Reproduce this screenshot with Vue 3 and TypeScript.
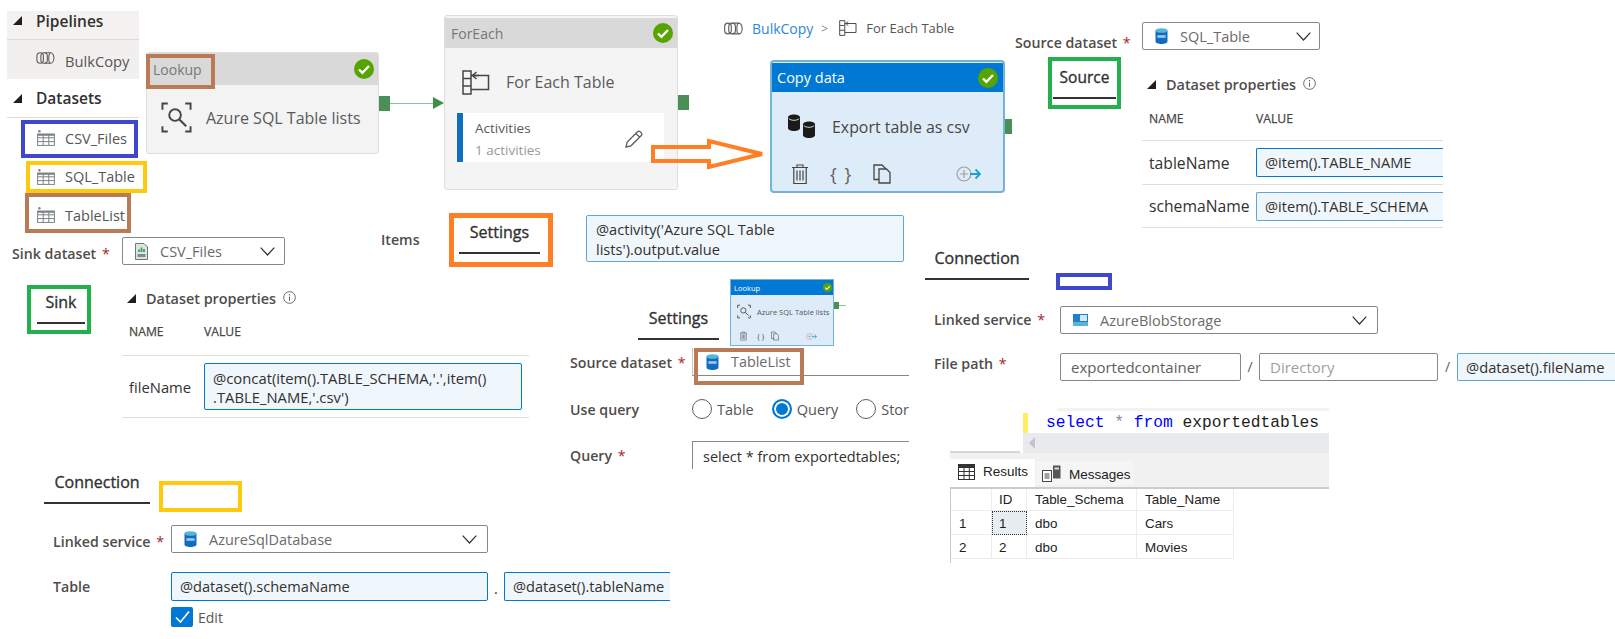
<script setup lang="ts">
interface DatasetRow { name: string }
const datasets: DatasetRow[] = [{ name: 'CSV_Files' }, { name: 'SQL_Table' }, { name: 'TableList' }]
const sqlRows = [
  { n: '1', id: '1', schema: 'dbo', table: 'Cars', active: true },
  { n: '2', id: '2', schema: 'dbo', table: 'Movies', active: false }
]
</script>

<template>
  <div class="canvas">
    <svg class="defs" width="0" height="0" aria-hidden="true">
      <defs>
        <symbol id="i-pipe" viewBox="0 0 20 13">
          <g fill="none" stroke="#605e5c" stroke-width="1.2">
            <rect x="0.7" y="0.8" width="7" height="11.4" rx="3.5" />
            <rect x="5" y="0.8" width="7" height="11.4" rx="3.5" />
            <path d="M9 .8h6.5a3.6 5.7 0 0 1 0 11.4H9" />
            <path d="M15.5 .8a2 5.7 0 0 0 0 11.4" />
          </g>
        </symbol>
        <symbol id="i-table" viewBox="0 0 18 16">
          <g fill="none" stroke="#7a8487" stroke-width="1">
            <rect x="0.6" y="4" width="16.8" height="11.4" />
            <path d="M0.6 7.8h16.800M0.6 11.600h16.800M6.200 4v11.400M11.800 4v11.400" />
          </g>
          <rect x="0.6" y="4" width="16.8" height="1.800" fill="#7a8487" />
          <circle cx="2.4" cy="1.3" r="1.2" fill="#7a8487" />
        </symbol>
        <symbol id="i-lookup" viewBox="0 0 32 32">
          <g fill="none" stroke="#484644" stroke-width="2">
            <path d="M7 1.5H1.5V8M25 1.5h5.5V8M7 30.5H1.5V25M25 30.5h5.5V25" />
            <circle cx="14.5" cy="13.5" r="6" />
            <path d="M19 18l7 7" stroke-width="2.2" />
          </g>
        </symbol>
        <symbol id="i-foreach" viewBox="0 0 28 25">
          <g fill="none" stroke="#484644" stroke-width="1.5">
            <path d="M1 1h8v23H1zM1 8.5h8M1 16h8" />
            <path d="M9 5.5h17.5v14H9" />
            <path d="M17 5.5h-6M14.5 2l-4 3.5 4 3.5" />
          </g>
        </symbol>
        <symbol id="i-check" viewBox="0 0 20 20">
          <circle cx="10" cy="10" r="10" fill="#57a300" />
          <path d="M5 10.5l3.4 3.4L15 7" fill="none" stroke="#fff" stroke-width="2.4" />
        </symbol>
        <symbol id="i-sql" viewBox="0 0 13 16">
          <path d="M0.5 2.5v11C0.5 15 3.2 16 6.5 16s6-1 6-2.5v-11z" fill="#0f6cc0" />
          <ellipse cx="6.5" cy="2.5" rx="6" ry="2.3" fill="#59b4d9" />
          <rect x="2.4" y="7.2" width="8.2" height="2.6" fill="#9ecbf0" />
        </symbol>
        <symbol id="i-csv" viewBox="0 0 13 17">
          <path d="M.5.5h8.5l3.5 3.5v12.5H.5z" fill="#dfe3e3" stroke="#69797e" />
          <path d="M4 9V6.5M6.5 9V4.5M9 9V6" stroke="#2e9f4a" stroke-width="1.7" />
          <rect x="2.5" y="11" width="8" height="3" fill="#7d8b8e" />
        </symbol>
        <symbol id="i-blob" viewBox="0 0 15 12">
          <rect width="15" height="12" fill="#1c7fd0" />
          <rect x="7" y="1" width="7" height="6" fill="#d5e7f5" />
          <rect y="8" width="15" height="4" fill="#59b4d9" />
        </symbol>
        <symbol id="i-trash" viewBox="0 0 16 20">
          <g fill="none" stroke="#484644" stroke-width="1.2">
            <path d="M0 3.5h16M5 3.5V1h6v2.5M1.8 3.5v16h12.4v-16" />
            <path d="M5 6.5v10M8 6.5v10M11 6.5v10" />
          </g>
        </symbol>
        <symbol id="i-copy" viewBox="0 0 18 20">
          <g fill="none" stroke="#484644" stroke-width="1.3">
            <path d="M6 15.5H1V1h8l4 4" />
            <path d="M6 5h7.5l3.5 3.5V19H6z" />
          </g>
        </symbol>
        <symbol id="i-addout" viewBox="0 0 25 16">
          <circle cx="8" cy="8" r="7" fill="none" stroke="#a19f9d" stroke-width="1.2" />
          <path d="M8 4v8M4 8h8" stroke="#a19f9d" stroke-width="1.2" />
          <path d="M14 8h9.5M19.5 3.5L24 8l-4.500 4.500" fill="none" stroke="#1fa0cc" stroke-width="1.800" />
        </symbol>
        <symbol id="i-pencil" viewBox="0 0 18 18">
          <path d="M1 17l1.200-5L12.500 1.700a1.800 1.800 0 0 1 2.600 0l1.200 1.200a1.800 1.800 0 0 1 0 2.600L6 15.800zM11 3.500l3.500 3.500" fill="none" stroke="#605e5c" stroke-width="1.300" />
        </symbol>
        <symbol id="i-chev" viewBox="0 0 15 9">
          <path d="M.7.7L7.500 8 14.300.7" fill="none" stroke="#323130" stroke-width="1.200" />
        </symbol>
        <symbol id="i-info" viewBox="0 0 14 14">
          <circle cx="7" cy="7" r="6.300" fill="none" stroke="#605e5c" />
          <path d="M7 6v4.500" stroke="#605e5c" stroke-width="1.100" />
          <circle cx="7" cy="4" r=".8" fill="#605e5c" />
        </symbol>
        <symbol id="i-grid" viewBox="0 0 17 16">
          <rect x=".5" y=".5" width="16" height="15" fill="#fff" stroke="#333" />
          <rect x=".5" y=".5" width="16" height="3.500" fill="#333" />
          <path d="M.5 7.500h16M.5 11.500h16M6 4v12M11.300 4v12" stroke="#333" />
        </symbol>
        <symbol id="i-msg" viewBox="0 0 19 17">
          <rect x=".5" y="5.500" width="9" height="11" fill="#fff" stroke="#444" />
          <path d="M2.500 9h5M2.500 11h5M2.500 13h5" stroke="#444" />
          <rect x="11" y=".5" width="7.500" height="13" fill="#555" />
          <rect x="12.500" y="2.500" width="4.500" height="2" fill="#ddd" />
        </symbol>
      </defs>
    </svg>

    <!-- Resource tree -->
    <aside class="tree">
      <div class="tree-head tree-head-pipe"><span class="tri"></span>Pipelines</div>
      <div class="tree-pipe"><svg class="ico-pipe"><use href="#i-pipe" /></svg>BulkCopy</div>
      <div class="tree-head tree-head-data"><span class="tri"></span>Datasets</div>
      <div v-for="d in datasets" :key="d.name" class="tree-item">
        <svg class="ico-table"><use href="#i-table" /></svg>{{ d.name }}
      </div>
    </aside>

    <!-- Lookup activity -->
    <div class="node node-lookup">
      <section class="card">
        <header class="card-head"><span>Lookup</span><svg class="ico-check"><use href="#i-check" /></svg></header>
        <div class="card-main main-lookup">
          <svg class="ico-lookup"><use href="#i-lookup" /></svg>
          <span>Azure SQL Table lists</span>
        </div>
      </section>
      <i class="handle"></i>
      <i class="link"></i>
      <i class="link-head"></i>
    </div>

    <!-- ForEach activity -->
    <div class="node node-foreach">
      <section class="card card-foreach">
        <header class="card-head head-foreach"><span>ForEach</span><svg class="ico-check"><use href="#i-check" /></svg></header>
        <div class="card-main main-foreach">
          <svg class="ico-foreach"><use href="#i-foreach" /></svg>
          <span>For Each Table</span>
        </div>
        <div class="activities">
          <div class="activities-text">
            <span>Activities</span>
            <small>1 activities</small>
          </div>
          <svg class="ico-pencil"><use href="#i-pencil" /></svg>
        </div>
      </section>
      <i class="handle"></i>
    </div>

    <!-- Breadcrumb -->
    <nav class="crumb">
      <svg class="ico-crumb-pipe"><use href="#i-pipe" /></svg>
      <a>BulkCopy</a>
      <span class="crumb-sep">&gt;</span>
      <svg class="ico-crumb-each"><use href="#i-foreach" /></svg>
      <span>For Each Table</span>
    </nav>

    <!-- Copy activity -->
    <div class="node node-copy">
      <section class="card card-active card-copy">
        <header class="card-head head-active"><span>Copy data</span><svg class="ico-check"><use href="#i-check" /></svg></header>
        <div class="card-main main-copy">
          <svg class="ico-cyl" viewBox="0 0 27 25">
            <g fill="#1b1a19">
              <path d="M0 3.500v10.500c0 1.800 2.700 3 6 3s6-1.200 6-3V3.500C12 1.700 9.300.5 6 .5S0 1.700 0 3.500z" />
              <path d="M15 10.500v10.500c0 1.800 2.700 3 6 3s6-1.200 6-3V10.500c0-1.800-2.700-3-6-3s-6 1.200-6 3z" />
            </g>
            <path d="M.8 4.500c1 1.200 3 1.800 5.200 1.800s4.200-.6 5.200-1.800M15.800 11.500c1 1.200 3 1.800 5.200 1.800s4.200-.6 5.200-1.800" fill="none" stroke="#deecf9" stroke-width=".9" />
          </svg>
          <span>Export table as csv</span>
        </div>
        <div class="card-tools">
          <svg class="ico-trash"><use href="#i-trash" /></svg>
          <span class="braces">{ }</span>
          <svg class="ico-copy"><use href="#i-copy" /></svg>
          <svg class="ico-addout"><use href="#i-addout" /></svg>
        </div>
      </section>
      <i class="handle handle-copy"></i>
    </div>

    <!-- Source -->
    <div class="field field-source">
      <label class="lbl">Source dataset <b>*</b></label>
      <div class="select select-source">
        <svg class="ico-sql"><use href="#i-sql" /></svg>
        <span>SQL_Table</span>
        <svg class="ico-chev"><use href="#i-chev" /></svg>
      </div>
    </div>
    <div class="tab tab-source">Source</div>
    <div class="props props-source">
      <div class="props-title"><span class="tri"></span>Dataset properties<svg class="ico-info"><use href="#i-info" /></svg></div>
      <div class="props-cols"><span>NAME</span><span>VALUE</span></div>
      <div class="props-row">
        <span>tableName</span>
        <div class="expr expr-clip">@item().TABLE_NAME</div>
      </div>
      <div class="props-row props-row-2">
        <span>schemaName</span>
        <div class="expr expr-clip expr-soft">@item().TABLE_SCHEMA</div>
      </div>
    </div>

    <!-- Items -->
    <div class="items-label">Items</div>
    <div class="tab tab-settings">Settings</div>
    <div class="expr expr-activity">@activity('Azure SQL Table<br />lists').output.value</div>

    <!-- Sink -->
    <div class="field field-sink">
      <label class="lbl">Sink dataset <b>*</b></label>
      <div class="select select-sink">
        <svg class="ico-csv"><use href="#i-csv" /></svg>
        <span>CSV_Files</span>
        <svg class="ico-chev"><use href="#i-chev" /></svg>
      </div>
    </div>
    <div class="tab tab-sink">Sink</div>
    <div class="props props-sink">
      <div class="props-title"><span class="tri"></span>Dataset properties<svg class="ico-info"><use href="#i-info" /></svg></div>
      <div class="props-cols"><span>NAME</span><span>VALUE</span></div>
      <div class="props-row props-row-sink">
        <span>fileName</span>
        <div class="expr expr-file">@concat(item().TABLE_SCHEMA,'.',item()<br />.TABLE_NAME,'.csv')</div>
      </div>
    </div>

    <!-- Lookup settings -->
    <div class="tab tab-settings-2">Settings</div>
    <div class="node node-mini">
      <section class="mini">
        <header class="mini-head"><span>Lookup</span><svg class="ico-mini-check"><use href="#i-check" /></svg></header>
        <div class="mini-main">
          <svg class="ico-mini-lookup"><use href="#i-lookup" /></svg>
          <span>Azure SQL Table lists</span>
        </div>
        <div class="mini-tools">
          <svg class="ico-mini-trash"><use href="#i-trash" /></svg>
          <span>{ }</span>
          <svg class="ico-mini-copy"><use href="#i-copy" /></svg>
          <svg class="ico-mini-add"><use href="#i-addout" /></svg>
        </div>
      </section>
      <i class="mini-handle"></i>
      <i class="mini-link"></i>
    </div>
    <div class="lookup-form">
      <div class="lf-row lf-row-1">
        <label class="lbl">Source dataset <b>*</b></label>
        <div class="lf-dataset">
          <svg class="ico-sql"><use href="#i-sql" /></svg>
          <span>TableList</span>
        </div>
      </div>
      <div class="lf-row lf-row-2">
        <label class="lbl">Use query</label>
        <div class="radios">
          <span class="radio radio-table"><i></i>Table</span>
          <span class="radio radio-on radio-query"><i></i>Query</span>
          <span class="radio"><i></i>Stor</span>
        </div>
      </div>
      <div class="lf-row lf-row-3">
        <label class="lbl">Query <b>*</b></label>
        <div class="lf-query">select * from exportedtables;</div>
      </div>
    </div>

    <!-- Connection, blob -->
    <div class="tab tab-conn-r">Connection</div>
    <div class="conn-blob">
      <label class="lbl">Linked service <b>*</b></label>
      <div class="select select-wide">
        <svg class="ico-blob"><use href="#i-blob" /></svg>
        <span>AzureBlobStorage</span>
        <svg class="ico-chev"><use href="#i-chev" /></svg>
      </div>
      <label class="lbl lbl-path">File path <b>*</b></label>
      <div class="path">
        <div class="input input-a">exportedcontainer</div>
        <span class="slash">/</span>
        <div class="input input-b">Directory</div>
        <span class="slash slash-2">/</span>
        <div class="expr expr-clip expr-soft expr-path">@dataset().fileName</div>
      </div>
    </div>

    <!-- SQL results -->
    <div class="sql">
      <div class="sql-top"></div>
      <div class="sql-line">
        <i class="sql-bar"></i>
        <code><em>select</em> <u>*</u> <em>from</em> exportedtables</code>
      </div>
      <div class="sql-scroll">
        <div class="sql-scroll-left"></div>
        <div class="sql-scroll-bar"><i></i></div>
      </div>
      <div class="sql-tabs">
        <div class="sql-tab sql-tab-on"><svg class="ico-grid"><use href="#i-grid" /></svg>Results</div>
        <div class="sql-tab"><svg class="ico-msg"><use href="#i-msg" /></svg>Messages</div>
      </div>
      <div class="sql-grid">
        <div class="cell"></div>
        <div class="cell">ID</div>
        <div class="cell">Table_Schema</div>
        <div class="cell">Table_Name</div>
        <template v-for="r in sqlRows" :key="r.n">
          <div class="cell">{{ r.n }}</div>
          <div class="cell" :class="{ 'cell-active': r.active }">{{ r.id }}</div>
          <div class="cell">{{ r.schema }}</div>
          <div class="cell">{{ r.table }}</div>
        </template>
      </div>
    </div>

    <!-- Connection, SQL -->
    <div class="tab tab-conn-l">Connection</div>
    <div class="conn-sql">
      <label class="lbl">Linked service <b>*</b></label>
      <div class="select select-wide select-sqlconn">
        <svg class="ico-sql"><use href="#i-sql" /></svg>
        <span>AzureSqlDatabase</span>
        <svg class="ico-chev"><use href="#i-chev" /></svg>
      </div>
      <label class="lbl lbl-table">Table</label>
      <div class="table-inputs">
        <div class="expr expr-schema">@dataset().schemaName</div>
        <span class="dot">.</span>
        <div class="expr expr-clip expr-tablename">@dataset().tableName</div>
      </div>
      <div class="edit">
        <span class="checkbox">
          <svg viewBox="0 0 22 20" width="22" height="20"><path d="M5 10.500l4.500 4.500L18 4.500" fill="none" stroke="#fff" stroke-width="1.600" /></svg>
        </span>
        Edit
      </div>
    </div>

    <!-- Annotations drawn over the collage -->
    <i class="anno anno-blue-1"></i>
    <i class="anno anno-yellow-1"></i>
    <i class="anno anno-brown-1"></i>
    <i class="anno anno-brown-2"></i>
    <i class="anno anno-brown-3"></i>
    <i class="anno anno-green-1"></i>
    <i class="anno anno-green-2"></i>
    <i class="anno anno-orange"></i>
    <i class="anno anno-blue-2"></i>
    <i class="anno anno-yellow-2"></i>
    <svg class="orange-arrow" viewBox="0 0 118 36">
      <path d="M3 11h56V5l53 13-53 13v-6H3z" fill="none" stroke="#ff7f27" stroke-width="4" />
    </svg>
  </div>
</template>

<style>
html, body { background: #fff; }
</style>

<style scoped>
.canvas {
  position: relative;
  width: 1615px;
  height: 639px;
  overflow: hidden;
  background: #fff;
  color: #323130;
  font-family: "Open Sans", "Noto Sans", sans-serif;
  font-size: 14.500px;
}
.defs { position: absolute; }
svg { display: block; flex: none; }
i { display: block; font-style: normal; }

/* Free-canvas placement of every collage fragment */
.tree, .node, .crumb, .field, .tab, .props, .items-label, .expr-activity,
.lookup-form, .conn-blob, .conn-sql, .sql, .anno, .orange-arrow { position: absolute; }

.tree { left: 7px; top: 11px; width: 132px; }
.node-lookup { left: 146px; top: 52px; }
.node-foreach { left: 444px; top: 15px; }
.crumb { left: 724px; top: 18px; height: 20px; }
.node-copy { left: 770px; top: 60px; }
.field-source { left: 1015px; top: 22px; }
.tab-source { left: 1053px; top: 67px; width: 63px; }
.props-source { left: 1142px; top: 75px; width: 301px; }
.items-label { left: 381px; top: 230px; }
.tab-settings { left: 459px; top: 222px; width: 81px; }
.expr-activity { left: 586px; top: 215px; width: 318px; height: 47px; position: absolute; }
.field-sink { left: 12px; top: 237px; }
.tab-sink { left: 37px; top: 292px; width: 48px; }
.props-sink { left: 122px; top: 289px; width: 407px; }
.tab-settings-2 { left: 638px; top: 308px; width: 81px; }
.node-mini { left: 730px; top: 279px; }
.lookup-form { left: 570px; top: 348px; width: 339px; }
.tab-conn-r { left: 925px; top: 248px; width: 104px; }
.conn-blob { left: 934px; top: 306px; width: 681px; }
.sql { left: 950px; top: 408px; width: 379px; }
.tab-conn-l { left: 44px; top: 472px; width: 106px; }
.conn-sql { left: 53px; top: 525px; width: 617px; }

/* Tree */
.tri {
  display: block;
  width: 0; height: 0;
  border-left: 9px solid transparent;
  border-bottom: 9px solid #201f1e;
}
.tree-head {
  display: flex;
  align-items: center;
  box-sizing: border-box;
  font-size: 15.500px;
  font-weight: 600;
  color: #323130;
  border-bottom: 1px solid #dcdbda;
}
.tree-head .tri { margin: 0 14px 0 6px; }
.tree-head-pipe { height: 29px; background: #f3f2f1; padding-bottom: 9px; }
.tree-head-data { height: 39px; }
.tree-pipe {
  display: flex; align-items: center;
  height: 39px;
  padding: 2px 0 0 29px;
  box-sizing: border-box;
  gap: 10px;
  background: #f1f0ef;
  color: #555;
  font-size: 14.700px;
}
.ico-pipe { width: 19px; height: 12px; margin-top: -6px; }
.tree-item {
  display: flex; align-items: center;
  height: 38.500px;
  padding-left: 30px;
  gap: 10px;
  font-size: 14.500px;
  color: #555;
}
.tree-head-data + .tree-item { margin-top: 1px; }
.ico-table { width: 18px; height: 16px; }

/* Activity nodes */
.node { display: flex; align-items: center; }
.card {
  width: 233px;
  height: 102px;
  box-sizing: border-box;
  background: #f3f3f3;
  border: 1px solid #dedede;
  border-radius: 3px;
  overflow: hidden;
  color: #5a5a5a;
}
.card-head {
  display: flex; align-items: center; justify-content: space-between;
  height: 32px;
  padding: 0 4px 0 6px;
  background: #d9d9d9;
  color: #777;
  font-size: 14px;
}
.ico-check { width: 20px; height: 20px; }
.card-main { display: flex; align-items: center; font-size: 16px; }
.main-lookup { gap: 14px; padding: 17px 0 0 14px; }
.ico-lookup { width: 31px; height: 31px; }
.handle { width: 11px; height: 15px; background: #4a8f55; }
.link { width: 43px; height: 1px; background: #8ec29a; }
.link-head {
  width: 0; height: 0;
  border-left: 11px solid #3f9142;
  border-top: 6.500px solid transparent;
  border-bottom: 6.500px solid transparent;
}
.card-foreach { width: 234px; height: 175px; background: #f4f4f4; padding-top: 2px; }
.head-foreach { height: 30px; padding-left: 6px; }
.main-foreach { gap: 16px; padding: 22px 0 0 17px; height: 24px; }
.ico-foreach { width: 28px; height: 25px; }
.activities {
  display: flex; align-items: center; justify-content: space-between;
  box-sizing: border-box;
  width: 207px; height: 49px;
  margin: 19px 0 0 12px;
  padding: 0 21px 0 12px;
  background: #fff;
  border-left: 6px solid #106ebe;
}
.activities-text { display: flex; flex-direction: column; gap: 2px; font-size: 13.500px; padding-top: 3px; }
.activities-text span { line-height: 20px; }
.activities-text small { font-size: 13.500px; line-height: 20px; color: #999; }
.ico-pencil { width: 18px; height: 18px; margin-top: 2px; }

.crumb { display: flex; align-items: center; font-size: 13px; color: #555; white-space: nowrap; }
.crumb a { color: #2b88d8; margin-left: 9px; font-size: 14px; }
.crumb-sep { margin: 0 11px 0 8px; color: #888; font-size: 12px; }
.ico-crumb-pipe { width: 19px; height: 13px; }
.ico-crumb-each { width: 18px; height: 16px; margin-right: 9px; }

.card-copy { width: 235px; height: 133px; padding-top: 1px; }
.card-active { background: #deecf9; border: 2px solid #74b3d6; border-radius: 4px; }
.head-active { height: 29px; background: #0078d4; color: #fff; font-size: 14.500px; padding: 0 5px 0 5px; }
.main-copy { gap: 17px; padding: 22px 0 0 16px; height: 25px; color: #484644; font-size: 15.900px; }
.ico-cyl { width: 27px; height: 25px; }
.card-tools { display: flex; align-items: center; height: 20px; padding: 25px 0 0 20px; }
.ico-trash { width: 16px; height: 20px; }
.braces { margin-left: 22px; font-size: 18px; color: #605e5c; width: 20px; letter-spacing: 1.500px; white-space: nowrap; }
.ico-copy { width: 18px; height: 20px; margin-left: 23px; }
.ico-addout { width: 25px; height: 16px; margin-left: 65px; }
.handle-copy { width: 7px; }

/* Form bits */
.field { display: flex; align-items: center; }
.lbl { font-size: 14.200px; font-weight: 600; color: #4f4d4b; white-space: nowrap; }
.lbl b { color: #a4262c; font-weight: 400; margin-left: 2px; }
.field-source .lbl { width: 127px; margin-top: 11px; }
.field-sink .lbl { width: 110px; margin-top: 5px; }
.select {
  display: flex; align-items: center;
  box-sizing: border-box;
  height: 28px;
  border: 1px solid #8a8886;
  border-radius: 2px;
  color: #6b6a69;
  font-size: 14.500px;
}
.ico-chev { width: 15px; height: 9px; margin-left: auto; }
.ico-sql { width: 13px; height: 16px; }
.select-source { width: 178px; padding: 0 8px 0 12px; }
.select-source span { margin-left: 12px; }
.field-source { align-items: flex-start; }
.select-sink { width: 163px; padding: 0 9px 0 12px; }
.select-sink span { margin-left: 12px; }
.ico-csv { width: 13px; height: 17px; }

.tab {
  box-sizing: border-box;
  height: 32px;
  line-height: 20px;
  padding-bottom: 10px;
  border-bottom: 2px solid #333;
  text-align: center;
  font-size: 16px;
  font-weight: 400;
  -webkit-text-stroke: 0.35px #323130;
  color: #323130;
  white-space: nowrap;
}
.tab-source { font-size: 15.500px; }

.props { display: flex; flex-direction: column; }
.props-title {
  display: flex; align-items: center;
  height: 18px;
  padding-left: 5px;
  font-size: 14.400px;
  font-weight: 600;
  color: #4f4d4b;
}
.props-title .tri { margin-right: 10px; }
.ico-info { width: 13px; height: 13px; margin: -2px 0 0 7px; }
.props-cols {
  display: grid;
  box-sizing: border-box;
  height: 48px;
  padding: 15px 0 0 7px;
  line-height: 22px;
  font-size: 12.200px;
  font-weight: 400;
  -webkit-text-stroke: 0.25px #484644;
  color: #484644;
  border-bottom: 1px solid #e1dfdd;
}
.props-source .props-cols { grid-template-columns: 107px 1fr; }
.props-sink .props-cols { grid-template-columns: 75px 1fr; height: 49px; padding-top: 14px; }
.props-row {
  display: grid;
  align-items: center;
  box-sizing: border-box;
  height: 44px;
  padding-left: 7px;
  border-bottom: 1px solid #e1dfdd;
  grid-template-columns: 107px 1fr;
  font-size: 15.700px;
}
.props-row-2 { height: 43px; }
.props-row-sink { grid-template-columns: 75px 1fr; height: 62px; font-size: 14.800px; padding-right: 7px; }

.expr {
  box-sizing: border-box;
  background: #eff6fc;
  border: 1px solid #0078d4;
  border-radius: 2px;
  color: #323130;
  font-size: 14.600px;
  white-space: nowrap;
  padding-left: 8px;
}
.expr-clip { height: 29px; line-height: 27px; border-right: 0; border-radius: 2px 0 0 2px; overflow: hidden; }
.expr-soft { border-color: #5ea6dc; }
.expr-activity { padding: 4px 0 0 9px; line-height: 19.500px; font-size: 14.600px; border-color: #5ea6dc; }
.expr-file { height: 47px; line-height: 19px; padding-top: 5px; font-size: 14.800px; }

.items-label { font-size: 14.200px; font-weight: 600; color: #4f4d4b; line-height: 20px; }

/* Mini card */
.mini {
  box-sizing: border-box;
  width: 104px; height: 67px;
  background: #deecf9;
  border: 1px solid #74b3d6;
  color: #555;
  font-size: 7.500px;
}
.mini-head {
  display: flex; align-items: center; justify-content: space-between;
  height: 15px;
  padding: 0 1px 0 3px;
  background: #0078d4;
  color: #fff;
}
.ico-mini-check { width: 9px; height: 9px; }
.mini-main { display: flex; align-items: center; gap: 6px; padding: 9px 0 0 6px; }
.ico-mini-lookup { width: 14px; height: 15px; }
.mini-tools { display: flex; align-items: center; padding: 12px 0 0 9px; }
.ico-mini-trash { width: 7px; height: 10px; }
.mini-tools span { margin-left: 10px; width: 10px; white-space: nowrap; }
.ico-mini-copy { width: 8px; height: 10px; margin-left: 4px; }
.ico-mini-add { width: 11px; height: 7px; margin-left: 27px; }
.mini-handle { width: 5px; height: 7px; background: #4a8f55; margin-bottom: 14px; }
.mini-link { width: 7px; height: 1px; background: #8ec29a; margin-bottom: 14px; }

/* Lookup form */
.lookup-form { overflow: hidden; height: 121px; display: flex; flex-direction: column; }
.lf-row { display: grid; grid-template-columns: 122px 1fr; align-items: center; }
.lf-row-1 { height: 28px; }
.lf-dataset {
  display: flex; align-items: center;
  box-sizing: border-box;
  height: 28px;
  padding-left: 13px;
  gap: 12px;
  border-left: 1px solid #c8c6c4;
  border-bottom: 1px solid #8a8886;
  color: #6b6a69;
  font-size: 14.400px;
}
.lf-row-2 { margin-top: 22px; height: 22px; }
.radios { display: flex; align-items: center; font-size: 14.500px; color: #555; overflow: hidden; white-space: nowrap; }
.radio { display: flex; align-items: center; gap: 5px; }
.radio i { box-sizing: border-box; width: 20px; height: 20px; border: 1px solid #605e5c; border-radius: 50%; flex: none; }
.radio-table { margin-right: 18px; }
.radio-query { margin-right: 18px; }
.radio-on i { border: 2px solid #0078d4; box-shadow: inset 0 0 0 2px #fff; background: #0078d4; }
.lf-row-3 { margin-top: 21px; height: 28px; }
.lf-query {
  box-sizing: border-box;
  height: 28px;
  padding: 4px 0 0 10px;
  border-top: 1px solid #8a8886;
  border-left: 1px solid #8a8886;
  white-space: nowrap;
  overflow: hidden;
  font-size: 14.500px;
  line-height: 22px;
  color: #323130;
}

/* Connection forms */
.conn-blob { display: grid; grid-template-columns: 126px 1fr; overflow: hidden; }
.select-wide { width: 318px; padding: 0 10px 0 12px; }
.select-wide span { margin-left: 12px; }
.ico-blob { width: 15px; height: 12px; }
.conn-blob .lbl { padding-top: 4px; }
.conn-blob .lbl-path { padding-top: 0; margin-top: 20px; }
.path { display: flex; margin-top: 19px; }
.input {
  box-sizing: border-box;
  height: 28px;
  line-height: 26px;
  padding-left: 10px;
  border: 1px solid #8a8886;
  border-radius: 2px;
  color: #605e5c;
  font-size: 15px;
  flex: none;
}
.input-a { width: 181px; }
.input-b { width: 179px; color: #a19f9d; font-size: 15px; }
.slash { width: 18px; text-align: center; line-height: 28px; font-size: 14px; color: #605e5c; flex: none; }
.slash-2 { width: 19px; }
.expr-path { flex: 1; height: 28px; line-height: 26px; font-size: 14.700px; }

.conn-sql { display: grid; grid-template-columns: 118px 1fr; overflow: hidden; }
.conn-sql .lbl { padding-top: 7px; }
.conn-sql .lbl-table { padding-top: 0; margin-top: 24px; }
.select-sqlconn { width: 317px; }
.table-inputs { display: flex; margin-top: 19px; height: 29px; }
.expr-schema { width: 317px; height: 29px; line-height: 27px; flex: none; }
.dot { width: 16px; height: 29px; text-align: center; line-height: 34px; flex: none; }
.expr-tablename { flex: 1; }
.edit { grid-column: 2; display: flex; align-items: center; gap: 5px; margin-top: 6px; height: 20px; font-size: 14px; color: #555; }
.checkbox { width: 22px; height: 20px; background: #0078d4; border-radius: 2px; }

/* SQL results */
.sql { font-family: "Liberation Sans", Arial, sans-serif; color: #222; }
.sql-top { height: 3px; margin-left: 107px; background: #f3f3f6; }
.sql-line { display: flex; height: 22px; margin-left: 73px; padding-top: 2px; box-sizing: border-box; }
.sql-bar { width: 5px; background: #ffee62; flex: none; }
.sql-line code {
  margin-left: 18px;
  font-family: "Liberation Mono", monospace;
  font-size: 16.250px;
  line-height: 22px;
  margin-top: -1px;
  color: #222;
  white-space: pre;
}
.sql-line em { font-style: normal; color: #0000ff; }
.sql-line u { text-decoration: none; color: #888; }
.sql-scroll { display: flex; height: 20px; }
.sql-scroll-left { width: 70px; border-bottom: 2px solid #d4d6de; box-sizing: border-box; }
.sql-scroll-bar { flex: 1; margin-left: 3px; background: #e9eaee; display: flex; align-items: center; padding-left: 6px; }
.sql-scroll-bar i {
  width: 0; height: 0;
  border-right: 6px solid #c2c4ca;
  border-top: 6px solid transparent;
  border-bottom: 6px solid transparent;
}
.sql-tabs {
  display: flex;
  align-items: flex-end;
  height: 34px;
  background: #f1f1f1;
  border-bottom: 2px solid #c9ccd3;
}
.sql-tab {
  display: flex; align-items: center;
  box-sizing: border-box;
  width: 98px; height: 24px;
  margin: 0 0 2px 1px;
  padding: 3px 0 0 6px;
  gap: 8px;
  background: #f5f5f5;
  font-size: 13.500px;
}
.sql-tab-on { width: 85px; height: 28px; margin: 0; padding: 0 0 3px 8px; background: #fff; }
.ico-grid { width: 17px; height: 16px; }
.ico-msg { width: 19px; height: 17px; margin-top: -3px; }
.sql-grid {
  display: grid;
  grid-template-columns: 41px 35px 110px 97px;
  grid-template-rows: 22px 24px 24px;
  width: 283px;
  border-left: 1px solid #c9c9c9;
  padding-bottom: 4px;
  font-size: 13.400px;
}
.cell {
  box-sizing: border-box;
  padding: 1px 0 0 8px;
  line-height: 23px;
  border-right: 1px solid #ececec;
  border-bottom: 1px solid #ececec;
}
.sql-grid > .cell:nth-child(-n+4) { line-height: 21px; padding-top: 0; }
.sql-grid > .cell:nth-child(4n+2) { padding-left: 7px; }
.cell-active { background: #e8edf1; outline: 1px dotted #333; outline-offset: -1px; }

/* Annotation rectangles */
.anno { box-sizing: border-box; border-style: solid; border-width: 4px; }
.anno-blue-1 { left: 21px; top: 120px; width: 117px; height: 38px; border-color: #3f48cc; }
.anno-yellow-1 { left: 26px; top: 161px; width: 121px; height: 32px; border-color: #ffc90e; }
.anno-brown-1 { left: 25px; top: 193px; width: 106px; height: 40px; border-color: #b97a57; }
.anno-brown-2 { left: 146px; top: 54px; width: 69px; height: 35px; border-color: #b97a57; }
.anno-brown-3 { left: 694px; top: 348px; width: 110px; height: 37px; border-color: #b97a57; }
.anno-green-1 { left: 1048px; top: 57px; width: 73px; height: 52px; border-color: #22b14c; }
.anno-green-2 { left: 27px; top: 285px; width: 64px; height: 49px; border-color: #22b14c; }
.anno-orange { left: 449px; top: 213px; width: 104px; height: 54px; border-color: #ff7f27; border-width: 5px; }
.anno-blue-2 { left: 1056px; top: 273px; width: 56px; height: 17px; border-color: #3f48cc; }
.anno-yellow-2 { left: 159px; top: 481px; width: 83px; height: 31px; border-color: #ffc90e; }
.orange-arrow { left: 650px; top: 136px; width: 118px; height: 36px; }
</style>
